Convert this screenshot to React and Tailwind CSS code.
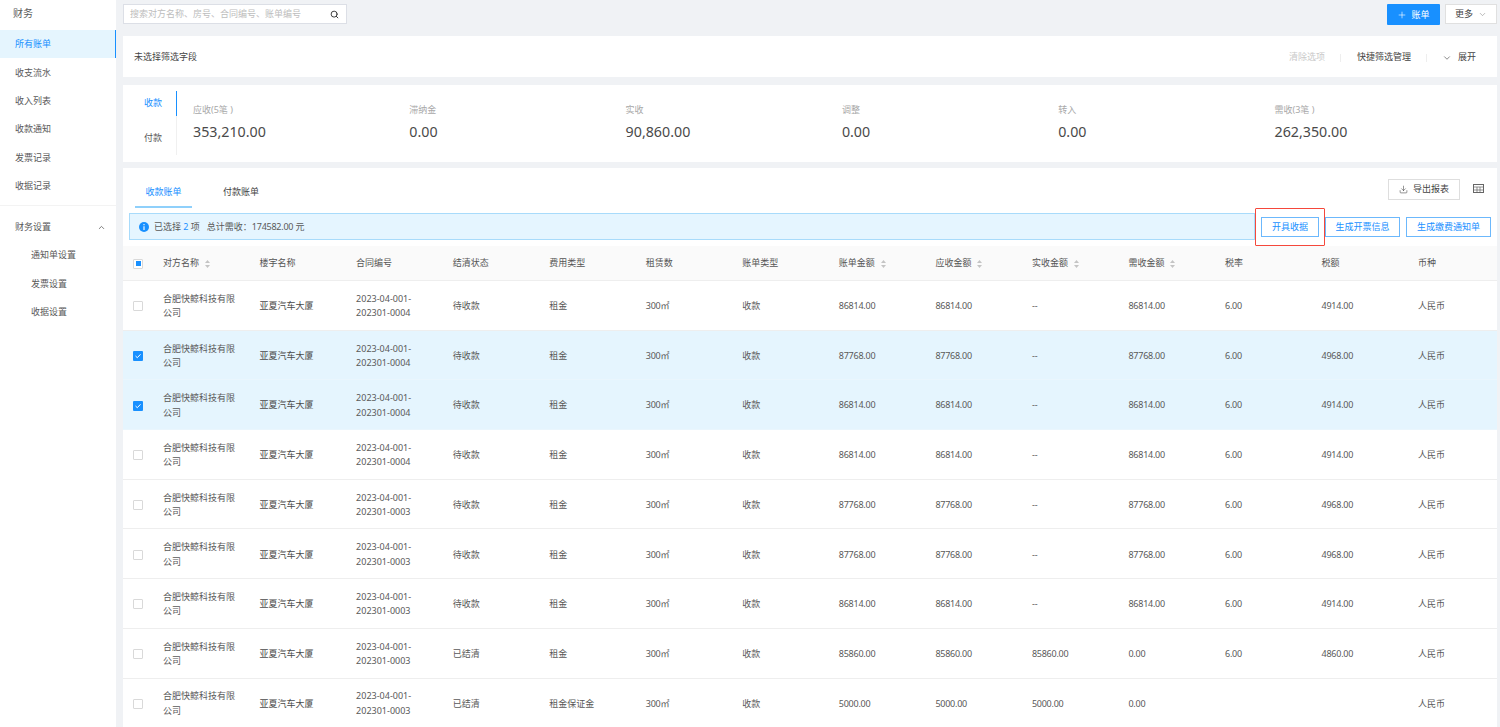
import React from 'react';
import { ChevronUp, ChevronDown, Plus, Search, Download } from 'lucide-react';

const FF = { fontFamily: '"Noto Sans","Noto Sans CJK SC",sans-serif' };

const rows = [
  { c: '0004', st: '待收款', fee: '租金', a: '86814.00', paid: '--', d: '86814.00', rate: '6.00', tax: '4914.00' },
  { c: '0004', st: '待收款', fee: '租金', a: '87768.00', paid: '--', d: '87768.00', rate: '6.00', tax: '4968.00', sel: true },
  { c: '0004', st: '待收款', fee: '租金', a: '86814.00', paid: '--', d: '86814.00', rate: '6.00', tax: '4914.00', sel: true },
  { c: '0004', st: '待收款', fee: '租金', a: '86814.00', paid: '--', d: '86814.00', rate: '6.00', tax: '4914.00' },
  { c: '0003', st: '待收款', fee: '租金', a: '87768.00', paid: '--', d: '87768.00', rate: '6.00', tax: '4968.00' },
  { c: '0003', st: '待收款', fee: '租金', a: '87768.00', paid: '--', d: '87768.00', rate: '6.00', tax: '4968.00' },
  { c: '0003', st: '待收款', fee: '租金', a: '86814.00', paid: '--', d: '86814.00', rate: '6.00', tax: '4914.00' },
  { c: '0003', st: '已结清', fee: '租金', a: '85860.00', paid: '85860.00', d: '0.00', rate: '6.00', tax: '4860.00' },
  { c: '0003', st: '已结清', fee: '租金保证金', a: '5000.00', paid: '5000.00', d: '0.00', rate: '', tax: '' },
];

const heads = [
  ['对方名称', true], ['楼宇名称'], ['合同编号'], ['结清状态'], ['费用类型'], ['租赁数'], ['账单类型'],
  ['账单金额', true], ['应收金额', true], ['实收金额', true], ['需收金额', true], ['税率'], ['税额'], ['币种'],
];

const stats = [
  ['应收(5笔 )', '353,210.00'], ['滞纳金', '0.00'], ['实收', '90,860.00'],
  ['调整', '0.00'], ['转入', '0.00'], ['需收(3笔 )', '262,350.00'],
];

const menu = ['所有账单', '收支流水', '收入列表', '收款通知', '发票记录', '收据记录'];
const GRID = 'grid grid-cols-[30px_repeat(13,96.55px)_70px] items-center pl-[10px]';
const NUM = 'tracking-[-0.25px]';

function Sort() {
  return (
    <svg width="5" height="8" viewBox="0 0 5 8" className="ml-[6px] shrink-0" fill="#c4c4c4">
      <path d="M2.5 0 5 3H0z" />
      <path d="M2.5 8 0 5h5z" />
    </svg>
  );
}

function Check({ state }) {
  if (state === 'on') {
    return (
      <span className="flex h-[10px] w-[10px] items-center justify-center rounded-[1px] bg-[#1890ff]">
        <svg width="8" height="8" viewBox="0 0 8 8" fill="none" stroke="#fff" strokeWidth="1">
          <path d="M1.5 4 3.3 5.7 6.5 2.3" />
        </svg>
      </span>
    );
  }
  if (state === 'mid') {
    return (
      <span className="flex h-[10px] w-[10px] items-center justify-center rounded-[1px] border border-[#d9d9d9] bg-white">
        <span className="h-[5px] w-[5px] bg-[#1890ff]" />
      </span>
    );
  }
  return <span className="block h-[10px] w-[10px] rounded-[1px] border border-[#d9d9d9] bg-white" />;
}

export default function App() {
  return (
    <div style={FF} className="flex h-[727px] w-[1500px] overflow-hidden bg-[#f0f2f5] text-[9px] leading-[14.5px] text-[#595959]">
      <aside className="h-full w-[116px] shrink-0 bg-white">
        <div className="flex h-[29.5px] items-center pb-[3px] pl-[13px] text-[10px]">财务</div>
        <nav className="flex flex-col">
          {menu.map((m, i) => (
            <div
              key={m}
              className={
                i === 0
                  ? 'flex h-[28.3px] items-center border-r-[1.5px] border-[#1890ff] bg-[#e5f5fe] pl-[15px] pt-[2px] text-[#1890ff]'
                  : 'flex h-[28.3px] items-center pl-[15px] pt-[2px]'
              }
            >
              {m}
            </div>
          ))}
        </nav>
        <div className="mt-[6px] border-t border-[#f3f3f3]">
          <div className="mt-[6px] flex h-[28.3px] items-center justify-between pl-[15px] pr-[10px] pt-[2px]">
            财务设置
            <ChevronUp size={9} strokeWidth={2.2} color="#666" />
          </div>
          {['通知单设置', '发票设置', '收据设置'].map((m) => (
            <div key={m} className="flex h-[28.3px] items-center pl-[31px] pt-[2px]">{m}</div>
          ))}
        </div>
      </aside>

      <main className="ml-[7px] flex h-full w-[1374px] shrink-0 flex-col">
        <div className="flex h-[25px] shrink-0 items-start justify-between pt-[4px]">
          <div className="flex h-[20px] w-[224px] items-center justify-between border border-[#dcdfe6] bg-white pl-[6px] pr-[7px] text-[#bdbdbd]">
            搜索对方名称、房号、合同编号、账单编号
            <Search size={9} strokeWidth={2.5} color="#333" />
          </div>
          <div className="flex items-start">
            <div className="flex h-[21px] w-[53px] items-center justify-center gap-[4px] rounded-[1px] bg-[#1890ff] pt-[1px] text-white">
              <Plus size={10} strokeWidth={1.5} />
              <span>账单</span>
            </div>
            <div className="ml-[5px] flex h-[20px] w-[52px] items-center justify-center gap-[5px] border border-[#e0e0e0] bg-white pt-[1px] text-[#444]">
              更多
              <ChevronDown size={9} strokeWidth={1.5} color="#888" />
            </div>
          </div>
        </div>

        <section className="mt-[11px] flex h-[41px] shrink-0 items-center justify-between bg-white pl-[11px] pr-[21px] pt-[2px] text-[#444]">
          <span>未选择筛选字段</span>
          <div className="flex items-center">
            <span className="text-[#c9c9c9]">清除选项</span>
            <span className="ml-[15px] h-[8px] w-px bg-[#eeeeee]" />
            <span className="ml-[16px]">快捷筛选管理</span>
            <span className="ml-[15px] h-[8px] w-px bg-[#eeeeee]" />
            <ChevronDown size={10} strokeWidth={1.5} className="ml-[15px]" />
            <span className="ml-[6px]">展开</span>
          </div>
        </section>

        <section className="mt-[8px] flex h-[77px] shrink-0 bg-white pt-[6px]">
          <div className="ml-[21px] flex h-[64px] w-[33px] flex-col border-r border-[#f0f0f0]">
            <div className="-mr-px flex h-[25px] items-center border-r-[1.5px] border-[#1890ff] text-[#1890ff]">收款</div>
            <div className="flex h-[39px] items-center pt-[6px]">付款</div>
          </div>
          <div className="ml-[16px] grid grid-cols-[repeat(6,216.3px)] pt-[12px]">
            {stats.map(([l, v]) => (
              <div key={l}>
                <div className="text-[#a8a8a8]">{l}</div>
                <div className="mt-[4px] text-[14.25px] leading-[20px] text-[#4a4a4a]">{v}</div>
              </div>
            ))}
          </div>
        </section>

        <section className="mt-[6px] min-h-0 flex-1 overflow-hidden bg-white">
          <div className="flex h-[40px] items-start justify-between pl-[12px] pr-[13px]">
            <div className="flex pt-[17px] text-[#444]">
              <div className="h-[23px] w-[57px] border-b-2 border-[#8fd0fb] text-center text-[#1890ff]">收款账单</div>
              <div className="ml-[31px]">付款账单</div>
            </div>
            <div className="flex items-start pt-[11px]">
              <div className="flex h-[21px] w-[72px] items-center justify-center gap-[5px] border border-[#dedede] text-[#444]">
                <Download size={9} strokeWidth={1.5} />
                导出报表
              </div>
              <svg width="11" height="9" viewBox="0 0 11 9" fill="none" stroke="#666" strokeWidth="1" className="ml-[13px] mt-[5px]">
                <rect x="0.5" y="0.5" width="10" height="8" />
                <path d="M0 3h11M0 6h11M4 3v6M7 3v6" strokeWidth="0.7" />
              </svg>
            </div>
          </div>

          <div className="ml-[6px] mt-[5px] flex h-[27px] items-start">
            <div className="flex h-[27px] w-[1126px] items-center border border-[#a8dbfb] bg-[#e5f5ff] pl-[9px] pt-[1px]">
              <svg width="10" height="10" viewBox="0 0 10 10" className="shrink-0">
                <circle cx="5" cy="5" r="5" fill="#1890ff" />
                <path d="M5 2v1.2M5 4.2V8" stroke="#fff" strokeWidth="1.1" />
              </svg>
              <span className="ml-[5px]">已选择 <span className="text-[#1890ff]">2</span> 项</span>
              <span className="ml-[7px]">总计需收：<span className={NUM}>174582.00</span> 元</span>
            </div>
            <div className="relative ml-[6px] mt-[4px] flex text-[#1890ff]">
              <div className="flex h-[20px] w-[58px] items-center justify-center border border-[#6cb8fc]">开具收据</div>
              <div className="ml-[6px] flex h-[20px] w-[75px] items-center justify-center border border-[#6cb8fc]">生成开票信息</div>
              <div className="ml-[6px] flex h-[20px] w-[85px] items-center justify-center border border-[#6cb8fc]">生成缴费通知单</div>
              <div className="pointer-events-none absolute left-[-6px] top-[-9px] h-[38px] w-[70px] rounded-[1px] border border-[#f5483b]" />
            </div>
          </div>

          <div className={`${GRID} mt-[6px] h-[35px] border-b border-[#eeeeee] bg-[#fafafa] pt-[1px] text-[#555]`}>
            <Check state="mid" />
            {heads.map(([h, s]) => (
              <div key={h} className="flex items-center">
                {h}
                {s && <Sort />}
              </div>
            ))}
          </div>

          {rows.map((r, i) => (
            <div
              key={i}
              className={`${GRID} h-[49.7px] border-b pt-[2px] ${r.sel ? 'border-[#eaf6fd] bg-[#e5f5fe]' : 'border-[#eeeeee] bg-white'}`}
            >
              <Check state={r.sel ? 'on' : 'off'} />
              <div className="w-[76px]">合肥快鲸科技有限公司</div>
              <div className="text-[#4a4a4a]">亚夏汽车大厦</div>
              <div className="w-[66px]">{`2023-04-001-202301-${r.c}`}</div>
              <div>{r.st}</div>
              <div>{r.fee}</div>
              <div className={NUM}>300㎡</div>
              <div>收款</div>
              <div className={NUM}>{r.a}</div>
              <div className={NUM}>{r.a}</div>
              <div className={r.paid === '--' ? '' : NUM}>{r.paid}</div>
              <div className={NUM}>{r.d}</div>
              <div className={NUM}>{r.rate}</div>
              <div className={NUM}>{r.tax}</div>
              <div>人民币</div>
            </div>
          ))}
        </section>
      </main>
    </div>
  );
}
